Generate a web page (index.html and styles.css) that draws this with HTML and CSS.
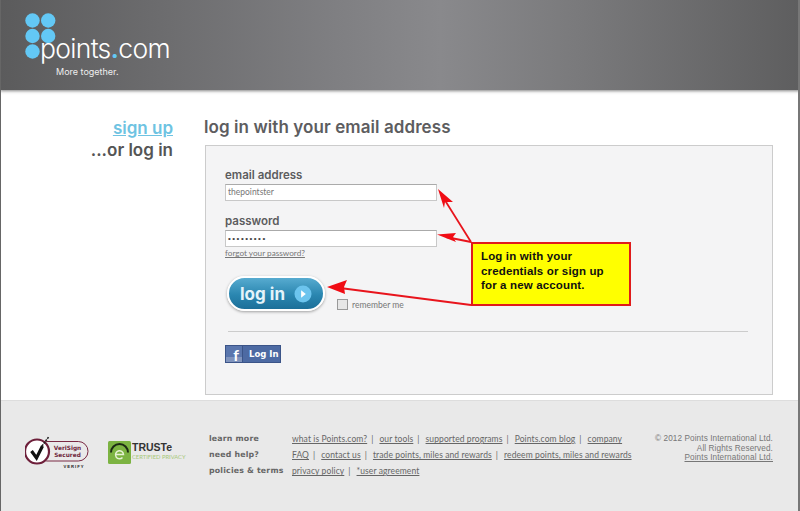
FILE: index.html
```html
<!DOCTYPE html>
<html lang="en">
<head>
<meta charset="utf-8">
<title>Points.com log in</title>
<link rel="stylesheet" href="styles.css">
</head>
<body>
<div class="page">
  <header class="header">
    <div class="logo">
      <svg class="dots" width="34" height="48" viewBox="0 0 34 48">
        <circle cx="7.5" cy="7.5" r="7.2"/><circle cx="23.2" cy="7.5" r="7.2"/>
        <circle cx="7.5" cy="23" r="7.2"/><circle cx="23.2" cy="23" r="7.2"/>
        <circle cx="7.5" cy="38.5" r="7.2"/>
      </svg>
      <div class="wordmark">points<span class="dot">.</span>com</div>
      <div class="tagline">More together.</div>
    </div>
  </header>
  <main class="main">
    <aside class="side">
      <a class="signup">sign up</a>
      <div class="orlog">...or log in</div>
    </aside>
    <section class="content">
      <h1 class="title">log in with your email address</h1>
      <div class="panel">
        <label class="label">email address</label>
        <div class="input">thepointster</div>
        <label class="label label-pw">password</label>
        <div class="input input-pw">•••••••••</div>
        <a class="forgot">forgot your password?</a>
        <div class="actions">
          <div class="btn">
            <span>log in</span>
            <svg width="18" height="18" viewBox="0 0 19 19"><circle cx="9.5" cy="9.5" r="9" fill="#6cc4ee"/><path d="M7.5 5.5l5 4-5 4z" fill="#fff"/></svg>
          </div>
          <div class="remember"><span class="check"></span><span>remember me</span></div>
        </div>
        <div class="rule"></div>
        <div class="fb"><span class="fb-f">f</span><span class="fb-t">Log In</span></div>
      </div>
    </section>
  </main>
  <footer class="footer">
    <div class="badges">
      <svg class="verisign" width="64" height="36" viewBox="0 0 64 36">
        <rect x="12" y="6.500" width="51" height="19.500" rx="9.700" fill="none" stroke="#7a2a44" stroke-width="1"/>
        <circle cx="12" cy="16.500" r="12" fill="#fff" stroke="#6d1f3a" stroke-width="2.200"/>
        <path d="M6.500 16l5 7 6-12" fill="none" stroke="#111" stroke-width="3.200"/>
        <path d="M17 11l7-9.500" fill="none" stroke="#222" stroke-width="1.600" stroke-dasharray="2 1"/>
        <text x="42.500" y="15" class="vs">VeriSign</text>
        <text x="42.500" y="22" class="vs">Secured</text>
        <text x="49" y="33" class="vs2">VERIFY</text>
      </svg>
      <div class="truste">
        <svg width="23" height="23" viewBox="0 0 23 23">
          <rect width="23" height="23" rx="1.500" fill="#7cb342"/>
          <path d="M3 11.500a8.500 8.500 0 0 1 17 0" fill="none" stroke="#1c2a14" stroke-width="2"/>
          <path d="M7.500 13.500h8a4 4 0 1 0-1 3" fill="none" stroke="#e7f2d5" stroke-width="1.500"/>
        </svg>
        <div class="truste-text"><b>TRUSTe</b><span>CERTIFIED PRIVACY</span></div>
      </div>
    </div>
    <div class="links">
      <div class="ltitle">learn more</div>
      <div class="lrow"><a>what is Points.com?</a><i>|</i><a>our tools</a><i>|</i><a>supported programs</a><i>|</i><a>Points.com blog</a><i>|</i><a>company</a></div>
      <div class="ltitle">need help?</div>
      <div class="lrow"><a>FAQ</a><i>|</i><a>contact us</a><i>|</i><a>trade points, miles and rewards</a><i>|</i><a>redeem points, miles and rewards</a></div>
      <div class="ltitle">policies &amp; terms</div>
      <div class="lrow"><a>privacy policy</a><i>|</i><a>*user agreement</a></div>
    </div>
    <div class="copy">© 2012 Points International Ltd.<br>All Rights Reserved.<br><a>Points International Ltd.</a></div>
  </footer>
  <svg class="arrows" width="800" height="511" viewBox="0 0 800 511">
    <g fill="none" stroke="#e8141c" stroke-width="1.800">
      <path d="M471 242L441 194"/>
      <path d="M471 242L446 237"/>
      <path d="M471 305L340 288"/>
    </g>
    <g fill="#f00c14">
      <path d="M438 189L453 202L445 202L444 208z"/>
      <path d="M437 234.500L456 233L453 237L456 242z"/>
      <path d="M327 287L347 280L344 287L345 294z"/>
    </g>
  </svg>
  <div class="note">Log in with your credentials or sign up for a new account.</div>
</div>
</body>
</html>
```
FILE: styles.css
```css
* { box-sizing: border-box; }
html, body { margin: 0; padding: 0; }
body { font-family: "Lato", "Liberation Sans", sans-serif; background: #fff; }
a { color: inherit; }
.page {
  position: relative;
  width: 800px;
  height: 511px;
  overflow: hidden;
  display: flex;
  flex-direction: column;
  background: #fff;
  border-left: 1px solid #666;
  border-right: 2px solid #777;
}
.header {
  flex: 0 0 90px;
  margin: 0 -2px 0 -1px;
  padding: 13px 0 0 25px;
  background: linear-gradient(90deg, #5b5b5c 0%, #6c6c6e 20%, #7f7f82 42%, #89898c 55%, #7a7a7c 72%, #5e5e5f 100%);
  box-shadow: 0 1px 3px rgba(90,90,90,.75);
}
.logo { position: relative; width: 150px; height: 66px; }
.dots { display: block; fill: #63c8f5; }
.wordmark {
  position: absolute;
  left: 15px;
  top: 18px;
  color: #fff;
  font-family: "Inter", sans-serif;
  font-size: 26.500px;
  line-height: 34px;
  letter-spacing: -.7px;
  font-weight: 300;
}
.dot { color: #63c8f5; font-weight: 600; }
.tagline {
  position: absolute;
  left: 31px;
  top: 53px;
  color: #eee;
  font-family: "Inter", sans-serif;
  font-size: 9px;
  line-height: 11px;
}
.main { flex: 0 0 310px; display: flex; padding-top: 26px; }
.side {
  flex: 0 0 172px;
  text-align: right;
  font-family: "Inter", sans-serif;
  font-size: 17px;
  font-weight: 600;
  line-height: 22px;
  padding-top: 1px;
}
.signup { display: block; color: #6ec3e2; text-decoration: underline; }
.orlog { color: #555; }
.content { margin-left: 31px; width: 569px; }
.title {
  margin: 0 0 6px 0;
  height: 23px;
  color: #5d5d5f;
  font-family: "Inter", sans-serif;
  font-size: 17px;
  line-height: 23px;
  letter-spacing: .08px;
  font-weight: 600;
}
.panel {
  margin-left: 1px;
  width: 568px;
  height: 250px;
  padding: 22px 24px 0 19px;
  background: #f4f4f5;
  border: 1px solid #ccc;
}
.label {
  display: block;
  color: #5c5c5e;
  font-family: "Inter", sans-serif;
  font-size: 11.500px;
  font-weight: 600;
  line-height: 15px;
}
.label-pw { margin-top: 13px; }
.input {
  width: 212px;
  height: 17px;
  margin-top: 1px;
  padding-left: 2px;
  background: #fff;
  border: 1px solid #c8c8c8;
  border-top-color: #aaa;
  color: #777;
  font-size: 8.500px;
  line-height: 15px;
}
.input-pw { color: #444; font: 8px/15px "Liberation Sans", sans-serif; letter-spacing: 1.500px; }
.forgot {
  display: block;
  margin-top: 1px;
  color: #777;
  font-size: 8.200px;
  line-height: 11px;
  text-decoration: underline;
}
.actions { display: flex; align-items: flex-start; margin-top: 17px; padding-left: 2px; }
.btn {
  width: 98px;
  height: 35px;
  display: flex;
  align-items: center;
  justify-content: center;
  gap: 9px;
  border-radius: 18px;
  border: 2px solid #fff;
  background: linear-gradient(180deg, #57abd0 0%, #2a86b0 55%, #1c6f99 100%);
  box-shadow: 0 1px 3px rgba(0,0,0,.35);
  color: #e4f3fa;
  font-family: "Inter", sans-serif;
  font-size: 17px;
  font-weight: 700;
}
.remember {
  display: flex;
  align-items: center;
  gap: 4px;
  margin: 23px 0 0 12px;
  color: #777;
  font-size: 8.500px;
}
.check { width: 11px; height: 11px; background: #e6e6e6; border: 1px solid #999; }
.rule { height: 1px; margin: 20px 0 0 3px; background: #ccc; }
.fb {
  display: flex;
  width: 56px;
  height: 18px;
  margin-top: 13px;
  background: #4d6aa3;
  border: 1px solid #3b5488;
  color: #fff;
  font-weight: 700;
}
.fb-f {
  width: 17px;
  text-align: right;
  padding-right: 3px;
  border-right: 1px solid #3b5488;
  background: linear-gradient(180deg, #5a76ad 70%, #8094bd 70%);
  font-size: 16px;
  line-height: 18px;
}
.fb-t { padding-left: 6px; font-size: 8.500px; line-height: 16px; font-family: "DejaVu Sans", sans-serif; }
.footer {
  flex: 1;
  position: relative;
  display: flex;
  padding: 30px 25px 0 24px;
  background: #e9e9e9;
  border-top: 1px solid #ddd;
}
.badges { flex: 0 0 184px; display: flex; align-items: flex-start; gap: 19px; padding-top: 4px; }
.verisign { flex: none; }
.vs { font: 700 5.800px "DejaVu Sans", sans-serif; fill: #6d1f3a; text-anchor: middle; }
.vs2 { font: 700 4.200px "Liberation Sans", sans-serif; fill: #222; text-anchor: middle; letter-spacing: 1px; }
.truste { display: flex; gap: 1px; margin-top: 6px; }
.truste-text { display: flex; flex-direction: column; padding-top: 1px; }
.truste-text b { color: #333; font: 700 10.500px/11px "Liberation Sans", sans-serif; }
.truste-text span { color: #a7c878; font-size: 5.800px; line-height: 7px; white-space: nowrap; }
.links {
  flex: 0 0 445px;
  display: grid;
  grid-template-columns: 83px 1fr;
  grid-auto-rows: 16px;
  align-content: start;
  font-size: 8.500px;
  line-height: 16px;
  color: #666;
}
.ltitle { color: #666; font-weight: 700; letter-spacing: .2px; font-family: "DejaVu Sans", sans-serif; font-size: 7.800px; }
.lrow { white-space: nowrap; letter-spacing: .1px; }
.lrow a { text-decoration: underline; }
.lrow i { font-style: normal; margin: 0 6px 0 4px; }
.copy {
  flex: 1;
  text-align: right;
  color: #777;
  font: 8.200px/9.500px "Liberation Sans", sans-serif;
  letter-spacing: .1px;
  padding-top: 3px;
  white-space: nowrap;
}
.copy a { text-decoration: underline; }
.arrows { position: absolute; left: -1px; top: 0; pointer-events: none; }
.note {
  position: absolute;
  left: 470px;
  top: 242px;
  width: 160px;
  height: 64px;
  padding: 5px 22px 0 8px;
  background: #ffff00;
  border: 2px solid #e01b1b;
  color: #111;
  font: 700 11.500px/14.500px "Liberation Sans", sans-serif;
  letter-spacing: .15px;
}
```
